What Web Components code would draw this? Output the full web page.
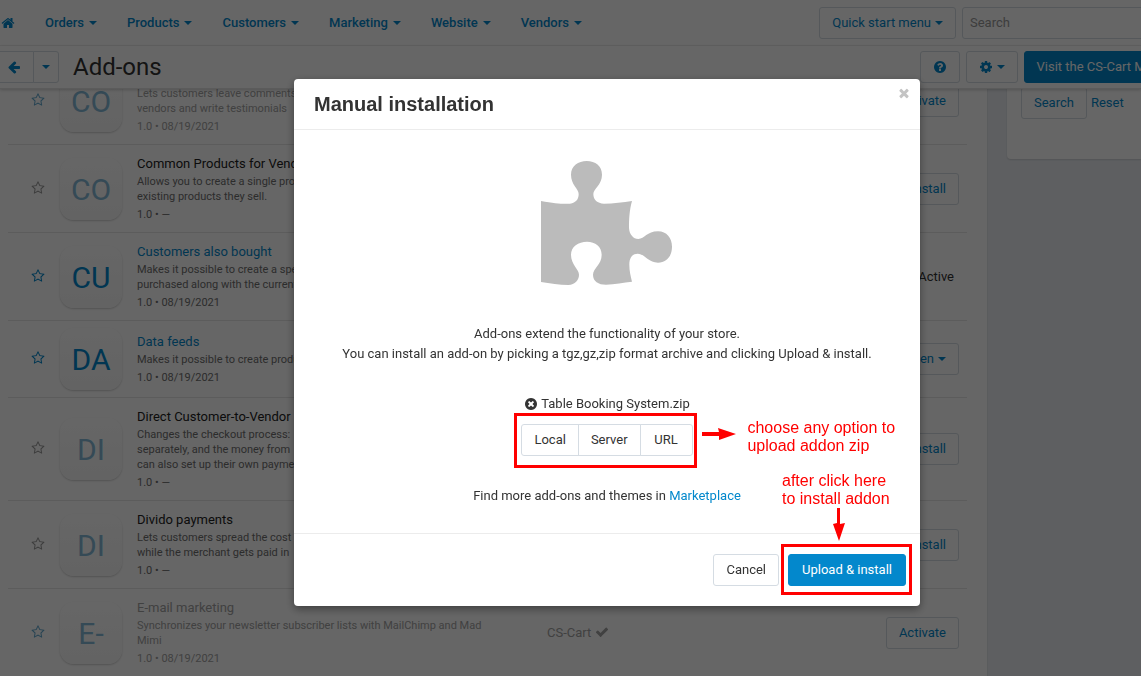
<!DOCTYPE html>
<html lang="en">
<head>
<meta charset="utf-8">
<title>Add-ons</title>
<style>
  html, body { margin: 0; height: 100%; overflow: hidden; }
  body { font: 13px/20px Roboto, "Liberation Sans", sans-serif; color: #333; background: #fff; --link: #0388cc; --line: #d5dce3; }
</style>
</head>
<body>
<admin-page></admin-page>
<script>
const define = (name, html, setup) => customElements.define(name, class extends HTMLElement {
  connectedCallback() {
    if (this.shadowRoot) return;
    const root = this.attachShadow({ mode: 'open' });
    const t = document.createElement('template');
    t.innerHTML = '<style>*{box-sizing:border-box}</style>' + (typeof html === 'function' ? html(this) : html);
    root.append(t.content.cloneNode(true));
    if (setup) setup(this, root);
  }
});

const disc = 'm384 192q0 209-103 385.500t-279.500 279.500-385.500 103-385.500-103-279.500-279.500-103-385.500 103-385.500 279.500-279.500 385.500-103 385.500 103 279.500 279.500 103 385.500z';
const icons = {
  home: 'M1472 992v480q0 26-19 45t-45 19h-384v-384h-256v384h-384q-26 0-45-19t-19-45v-480q0-1 .5-3t.5-3l575-474 575 474q1 2 1 6zm223-69l-62 74q-8 9-21 11h-3q-13 0-21-7l-692-577-692 577q-12 8-24 7-13-2-21-11l-62-74q-8-10-7-23.500t11-21.500l719-599q32-26 76-26t76 26l244 204v-195q0-14 9-23t23-9h192q14 0 23 9t9 23v408l219 182q10 8 11 21.500t-7 23.500z',
  back: 'M1664 896v128q0 53-32.500 90.500t-84.500 37.500h-704l293 294q38 36 38 90t-38 90l-75 76q-37 37-90 37-52 0-91-37l-651-652q-37-37-37-90 0-52 37-91l651-650q38-38 91-38 52 0 90 38l75 74q38 38 38 91t-38 91l-293 293h704q52 0 84.500 37.500t32.500 90.500z',
  help: 'M1024 1376v-192q0-14-9-23t-23-9h-192q-14 0-23 9t-9 23v192q0 14 9 23t23 9h192q14 0 23-9t9-23zm256-672q0-88-55.500-163t-138.500-116-170-41q-243 0-371 213-15 24 8 42l132 100q7 6 19 6 16 0 25-12 53-68 86-92 34-24 86-24 48 0 85.500 26t37.500 59q0 38-20 61t-68 45q-63 28-115.500 86.500t-52.500 125.500v36q0 14 9 23t23 9h192q14 0 23-9t9-23q0-19 21.500-49.500t54.500-49.500q32-18 49-28.500t46-35 44.500-48 28-60.500 12.500-81z' + disc,
  cog: 'M1152 896q0-106-75-181t-181-75-181 75-75 181 75 181 181 75 181-75 75-181zm512-109v222q0 12-8 23t-20 13l-185 28q-19 54-39 91 35 50 107 138 10 12 10 25t-9 23q-27 37-99 108t-94 71q-12 0-26-9l-138-108q-44 23-91 38-16 136-29 186-7 28-36 28h-222q-14 0-24.500-8.500t-11.500-21.500l-28-184q-49-16-90-37l-141 107q-10 9-25 9-14 0-25-11-126-114-165-168-7-10-7-23 0-12 8-23 15-21 51-66.500t54-70.500q-27-50-41-99l-183-27q-13-2-21-12.500t-8-23.500v-222q0-12 8-23t19-13l186-28q14-46 39-92-40-57-107-138-10-12-10-24 0-10 9-23 26-36 98.500-107.500t94.500-71.500q13 0 26 10l138 107q44-23 91-38 16-136 29-186 7-28 36-28h222q14 0 24.500 8.500t11.500 21.500l28 184q49 16 90 37l142-107q9-9 24-9 13 0 25 10 129 119 165 170 7 8 7 22 0 12-8 23-15 21-51 66.500t-54 70.500q26 50 41 98l183 28q13 2 21 12.500t8 23.500z',
  star: 'M1201 1004l306-297-422-62-189-382-189 382-422 62 306 297-73 421 378-199 377 199zm527-357q0 22-26 48l-363 354 86 500q1 7 1 20 0 50-41 50-19 0-40-12l-449-236-449 236q-22 12-40 12-21 0-31.500-14.500t-10.500-35.500q0-6 2-20l86-500-364-354q-25-27-25-48 0-37 56-46l502-73 225-455q19-41 49-41t49 41l225 455 502 73q56 9 56 46z',
  check: 'M1671 566q0 40-28 68l-724 724-136 136q-28 28-68 28t-68-28l-136-136-362-362q-28-28-28-68t28-68l136-136q28-28 68-28t68 28l294 295 656-657q28-28 68-28t68 28l136 136q28 28 28 68z',
  close: 'M1490 1322q0 40-28 68l-136 136q-28 28-68 28t-68-28l-294-294-294 294q-28 28-68 28t-68-28l-136-136q-28-28-28-68t28-68l294-294-294-294q-28-28-28-68t28-68l136-136q28-28 68-28t68 28l294 294 294-294q28-28 68-28t68 28l136 136q28 28 28 68t-28 68l-294 294 294 294q28 28 28 68z',
  remove: 'M1277 1122q0-26-19-45l-181-181 181-181q19-19 19-45 0-27-19-46l-90-90q-19-19-46-19-26 0-45 19l-181 181-181-181q-19-19-45-19-27 0-46 19l-90 90q-19 19-19 46 0 26 19 45l181 181-181 181q-19 19-19 45 0 27 19 46l90 90q19 19 46 19 26 0 45-19l181-181 181 181q19 19 45 19 27 0 46-19l90-90q19-19 19-46zm387-226q0 209-103 385.500t-279.500 279.500-385.500 103-385.500-103-279.500-279.500-103-385.500 103-385.500 279.500-279.500 385.500-103 385.500 103 279.500 279.500 103 385.500z'
};

define('ui-icon', el => `
<style>:host{display:inline-block;flex:none;width:14px;height:14px} svg{display:block;width:100%;height:100%;fill:currentColor}</style>
<svg viewBox="0 0 1792 1792" aria-hidden="true"><path d="${icons[el.getAttribute('name')]}"/></svg>`);

define('ui-caret', `
<style>:host{display:inline-block;flex:none;border:4px solid transparent;border-top-color:currentColor;border-bottom:0}</style>`);

define('ui-button', `
<style>
:host{display:inline-flex;flex:none}
button{display:flex;align-items:center;justify-content:center;gap:4px;height:32px;min-width:var(--min,0);padding:0 var(--pad,12px);border:1px solid var(--line);border-radius:var(--radius,3px);background:#fff;color:var(--ink,var(--link));font:inherit;white-space:nowrap}
:host([primary]) button{background:#0388cc;border-color:#0388cc;color:#fff}
</style><button type="button"><slot></slot></button>`,
(el, root) => { const l = el.getAttribute('label'); if (l) root.querySelector('button').setAttribute('aria-label', l); });

define('top-nav', `
<style>
:host{display:flex;align-items:center;height:46px;border-bottom:1px solid #f1f1f1;white-space:nowrap;overflow:hidden}
nav{display:flex;align-items:center;gap:30px;flex:1;padding-left:1px;font-weight:500}
a{display:flex;align-items:center;gap:5px;color:var(--link);text-decoration:none}
input{width:240px;height:32px;margin:0 -61px 0 6px;padding:0 7px;border:1px solid var(--line);border-radius:3px;font:inherit;flex:none}
input::placeholder{color:#999;opacity:1}
</style>
<nav aria-label="Main">
<a href="#" aria-label="Home"><ui-icon name="home"></ui-icon></a>
${['Orders', 'Products', 'Customers', 'Marketing', 'Website', 'Vendors'].map(n => `<a href="#">${n}<ui-caret></ui-caret></a>`).join('')}
</nav>
<ui-button>Quick start menu<ui-caret></ui-caret></ui-button>
<input type="search" placeholder="Search" aria-label="Search">`);

define('page-bar', `
<style>
:host{display:flex;align-items:center;height:43px;position:relative;white-space:nowrap;overflow:hidden;border-bottom:1px solid #e4e4e4;box-shadow:0 1px 3px #0003;background:#fff}
.group{display:flex;margin-left:-6px}
.group ui-button:first-child{--radius:3px 0 0 3px}
.group ui-button+ui-button{--radius:0 3px 3px 0;--pad:8px;margin-left:-1px}
h1{flex:1;margin:0 0 0 14px;font-size:24px;line-height:32px;font-weight:400}
.actions{display:flex;gap:6px;margin-right:-78px}
</style>
<div class="group"><ui-button label="Back"><ui-icon name="back"></ui-icon></ui-button><ui-button label="Recent pages"><ui-caret></ui-caret></ui-button></div>
<h1>Add-ons</h1>
<div class="actions"><ui-button label="Help"><ui-icon name="help"></ui-icon></ui-button><ui-button label="Settings"><ui-icon name="cog"></ui-icon><ui-caret></ui-caret></ui-button><ui-button primary>Visit the CS-Cart Marketplace</ui-button></div>`);

const addons = [
  { s: 'off', i: 'CO', t: '', d: 'Lets customers leave comments<br>vendors and write testimonials', m: '08/19/2021', a: 'Activate' },
  { s: 'new', i: 'CO', t: 'Common Products for Vendors', d: 'Allows you to create a single product<br>existing products they sell.', m: '—', a: 'Install' },
  { s: 'on', i: 'CU', t: 'Customers also bought', d: 'Makes it possible to create a special<br>purchased along with the current', m: '08/19/2021', a: '' },
  { s: 'on', i: 'DA', t: 'Data feeds', d: 'Makes it possible to create product', m: '08/19/2021', a: 'Hidden' },
  { s: 'new', i: 'DI', t: 'Direct Customer-to-Vendor', d: 'Changes the checkout process:<br>separately, and the money from<br>can also set up their own payment', m: '—', a: 'Install' },
  { s: 'new', i: 'DI', t: 'Divido payments', d: 'Lets customers spread the cost<br>while the merchant gets paid in', m: '—', a: 'Install' },
  { s: 'off', i: 'E-', t: 'E-mail marketing', d: 'Synchronizes your newsletter subscriber lists with MailChimp and Mad<br>Mimi', m: '08/19/2021', a: 'Activate', v: 1 }
];
const action = r => r.a === 'Hidden' ? '<ui-button>Hidden<ui-caret></ui-caret></ui-button>' : r.a ? `<ui-button>${r.a}</ui-button>` : '<span class="state">Active</span>';

define('addon-table', `
<style>
:host{display:block;padding:0 20px 0 8px;overflow:hidden;min-width:0}
table{width:100%;margin-top:-32px;table-layout:fixed;border-collapse:separate;border-spacing:0}
td{padding:0;border-bottom:1px solid #e5e5e5;vertical-align:middle;white-space:nowrap}
.star{width:52px;padding:4px 0 0 23px;color:var(--link)}
.star button{display:block;padding:0;border:0;background:none;color:inherit;font:inherit}
.tile{width:77px;padding:7px 0}
.tile div{display:grid;place-items:center;width:62px;height:62px;padding-top:2px;border-radius:14px;background:linear-gradient(#fff,#f7f7f7);box-shadow:0 1px 2px #0003;font-size:30px;line-height:40px;color:var(--link)}
.info{width:410px;padding:9px 0 10px}
.info a{display:block;min-height:20px;color:var(--link);text-decoration:none}
.info p{margin:0;font-size:11px;line-height:15px;color:#6f6f6f}
.info p+p{margin-top:3px}
.vendor ui-icon{margin-left:4px;vertical-align:-2px}
.action{width:120px;padding-right:8px;text-align:right}
.action ui-button{vertical-align:middle}
.state{padding-right:5px}
.new .info a{color:#222}
.new .star{color:#999}
.new .tile div,.off .tile div{color:#85b9d7}
.off .star{color:#63a9cf}
.off .info a,.off .info p,.off .vendor{color:#a2a2a2}
</style>
<table aria-label="Add-ons"><tbody>${addons.map(r => `
<tr class="${r.s}"><td class="star"><button type="button" aria-label="Add to favorites"><ui-icon name="star"></ui-icon></button></td>
<td class="tile"><div>${r.i}</div></td>
<td class="info"><a href="#">${r.t}</a><p>${r.d}</p><p>1.0 • ${r.m}</p></td>
<td class="vendor">${r.v ? 'CS-Cart<ui-icon name="check"></ui-icon>' : ''}</td>
<td class="action">${action(r)}</td></tr>`).join('')}
</tbody></table>`);

define('filter-panel', `
<style>
:host{display:block;padding-left:19px;background:#ebeef3;border-left:1px solid #e2e5e9;overflow:hidden}
form{display:flex;align-items:flex-start;gap:4px;height:72px;margin-top:-2px;padding-left:14px;background:#fff;border-radius:0 0 0 4px;box-shadow:0 1px 2px #0002}
a{color:var(--link);text-decoration:none;padding-top:6px}
</style>
<form><ui-button>Search</ui-button><a href="#">Reset</a></form>`);

define('red-arrow', el => `
<style>:host{display:block} svg{display:block;fill:#f00}</style>
${el.hasAttribute('down')
  ? '<svg width="12" height="33" viewBox="0 0 12 33"><path d="M4 0h3v16l5-1-6 18-6-17 4-1z"/></svg>'
  : '<svg width="34" height="12" viewBox="0 0 34 12"><path d="M0 4h17l-1-4 18 6-17 6V8H0z"/></svg>'}`);

define('red-frame', `
<style>
:host{display:inline-block;position:relative}
.box{position:absolute;inset:var(--inset);border:3px solid #f00;pointer-events:none}
.note{position:absolute;left:var(--x);top:var(--y);font:16px/18px "Liberation Sans",Arial,sans-serif;color:#f00;text-align:left;white-space:nowrap}
::slotted(red-arrow){position:absolute!important;left:var(--ax);top:var(--ay)}
</style><slot></slot><div class="box"></div><div class="note"><slot name="note"></slot></div><slot name="arrow"></slot>`);

define('install-dialog', `
<style>
:host{display:block;background:#fff;border-radius:4px;box-shadow:0 3px 8px #0006}
header{display:flex;justify-content:space-between;align-items:flex-start;height:51px;padding:10px 9px 0 20px;border-bottom:1px solid #ececec}
h2{margin:0;font:700 20px/30px "Liberation Sans",Arial,sans-serif}
.x{display:block;padding:0;margin-top:-3px;border:0;background:none;color:#c4c4c4}
main{display:flex;flex-direction:column;align-items:center;padding:30px 0 27px;text-align:center}
p{margin:0}
.puzzle{display:block;fill:#bbb;margin-bottom:37px}
.file{display:flex;align-items:center;gap:3px;margin:30px 0 10px}
.file button{display:flex;padding:0;border:0;background:none;color:#333}
.group{display:flex;--ink:#333}
.group ui-button+ui-button{margin-left:-1px}
.group ui-button{--radius:0}
.group ui-button:first-child{--radius:3px 0 0 3px}
.group ui-button:last-child{--radius:0 3px 3px 0;--min:53px}
.more{margin-top:30px}
a{color:var(--link);text-decoration:none}
footer{display:flex;justify-content:flex-end;gap:9px;padding:20px 14px 20px;border-top:1px solid #ececec}
.cancel{--ink:#333}
.pick{--inset:-11px -4px -12px -7px;--x:226px;--y:-5px;--ax:181px;--ay:4px}
.go{--min:118px;--inset:-10px -6px -9px -7px;--x:-6px;--y:-82px;--ax:45px;--ay:-46px}
</style>
<header><h2>Manual installation</h2><button class="x" type="button" aria-label="Close"><ui-icon name="close"></ui-icon></button></header>
<main>
<svg class="puzzle" width="134" height="127" viewBox="120 60 402 381" aria-hidden="true"><path d="M123 183C165 190 190 193 210 191C228 188 236 178 236 162C236 145 213 135 213 104C213 78 235 63 260 63C286 63 306 78 306 104C306 135 280 145 280 162C280 180 292 190 312 191C340 191 370 187 396 183C388 210 387 240 387 264C388 283 400 297 415 297C434 297 440 274 474 274C500 274 516 294 516 320C516 348 500 368 474 368C444 368 434 341 413 341C398 341 388 352 388 374C388 392 392 408 396 425C370 427 345 433 318 434C295 434 279 424 279 404C279 384 305 374 305 344C305 320 286 305 261 305C235 305 213 320 213 344C213 374 237 388 237 404C237 420 225 434 205 435C178 435 150 429 123 426Z"/></svg>
<p>Add-ons extend the functionality of your store.</p>
<p>You can install an add-on by picking a tgz,gz,zip format archive and clicking Upload &amp; install.</p>
<div class="file"><button type="button" aria-label="Remove file"><ui-icon name="remove"></ui-icon></button><span>Table Booking System.zip</span></div>
<red-frame class="pick"><div class="group"><ui-button>Local</ui-button><ui-button>Server</ui-button><ui-button>URL</ui-button></div>
<span slot="note">choose any option to<br>upload addon zip</span><red-arrow slot="arrow"></red-arrow></red-frame>
<p class="more">Find more add-ons and themes in <a href="#">Marketplace</a></p>
</main>
<footer><ui-button class="cancel">Cancel</ui-button><red-frame class="go"><ui-button primary>Upload &amp; install</ui-button>
<span slot="note">after click here<br>to install addon</span><red-arrow slot="arrow" down></red-arrow></red-frame></footer>`);

define('admin-page', `
<style>
:host{display:flex;flex-direction:column;height:100vh;overflow:hidden}
top-nav,page-bar{flex:none}
.work{display:grid;grid-template-columns:minmax(0,1fr) 154px;flex:1;min-height:0}
.shade{position:fixed;inset:0;padding:79px 221px 0 294px;background:#0009}
</style>
<top-nav></top-nav><page-bar></page-bar>
<div class="work"><addon-table></addon-table><filter-panel></filter-panel></div>
<div class="shade"><install-dialog role="dialog" aria-modal="true" aria-label="Manual installation"></install-dialog></div>`);
</script>
</body>
</html>
